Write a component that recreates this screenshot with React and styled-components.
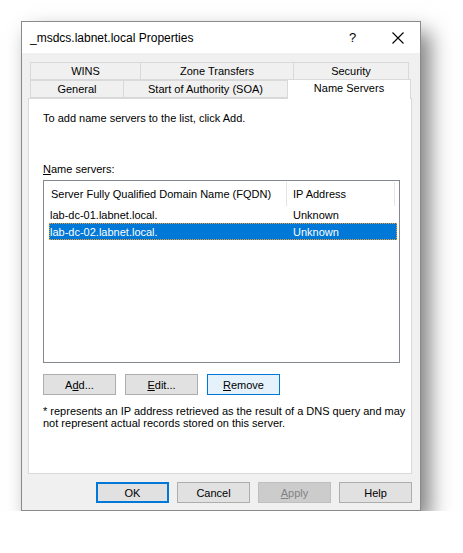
import React from "react";
import styled, { createGlobalStyle } from "styled-components";

const GlobalStyle = createGlobalStyle`
  html, body {
    margin: 0;
    background: #ffffff;
  }
  body {
    font-family: "Liberation Sans", Arial, sans-serif;
    font-size: 11px;
    color: #000;
  }
`;

const topTabs = [
  { label: "WINS", width: 110 },
  { label: "Zone Transfers", width: 153 },
  { label: "Security", width: 116 },
];

const bottomTabs = [
  { label: "General", width: 93 },
  { label: "Start of Authority (SOA)", width: 164 },
  { label: "Name Servers", width: 124, active: true },
];

const servers = [
  { name: "lab-dc-01.labnet.local.", ip: "Unknown" },
  { name: "lab-dc-02.labnet.local.", ip: "Unknown", selected: true },
];

function App() {
  return (
    <Page>
      <GlobalStyle />
      <Window>
        <TitleBar>
          <Title>_msdcs.labnet.local Properties</Title>
          <TitleBtn>?</TitleBtn>
          <TitleBtn>
            <svg width="12" height="12" viewBox="0 0 12 12">
              <path d="M0.5 0.5 L11.5 11.5 M11.5 0.5 L0.5 11.5" stroke="#000" strokeWidth="1.1" />
            </svg>
          </TitleBtn>
        </TitleBar>

        <Body>
          <Tabs>
            <TabRow>
              {topTabs.map((t) => (
                <Tab key={t.label} width={t.width}>{t.label}</Tab>
              ))}
            </TabRow>
            <TabRow>
              {bottomTabs.map((t) => (
                <Tab key={t.label} width={t.width} active={t.active}>{t.label}</Tab>
              ))}
            </TabRow>
          </Tabs>

          <Panel>
            <Intro>To add name servers to the list, click Add.</Intro>
            <ListLabel><u>N</u>ame servers:</ListLabel>
            <ListBox>
              <ListHeader>
                <HeadCell width={238} pad={2}>Server Fully Qualified Domain Name (FQDN)</HeadCell>
                <HeadCell width={108} pad={6}>IP Address</HeadCell>
              </ListHeader>
              {servers.map((s) => (
                <ListRow key={s.name} selected={s.selected}>
                  <Cell width={238} pad={1}>{s.name}</Cell>
                  <Cell width={108} pad={6}>{s.ip}</Cell>
                </ListRow>
              ))}
            </ListBox>

            <ButtonRow>
              <Button>A<u>d</u>d...</Button>
              <Button><u>E</u>dit...</Button>
              <Button focused><u>R</u>emove</Button>
            </ButtonRow>

            <Note>
              * represents an IP address retrieved as the result of a DNS query and may
              <br />
              not represent actual records stored on this server.
            </Note>
          </Panel>

          <Footer>
            <Button primary>OK</Button>
            <Button>Cancel</Button>
            <Button disabled><u>A</u>pply</Button>
            <Button>Help</Button>
          </Footer>
        </Body>
      </Window>
    </Page>
  );
}

const Page = styled.div`
  padding: 21px 0 0 21px;
`;

const Window = styled.div`
  width: 398px;
  height: 488px;
  border: 1px solid #8a8a8a;
  background: #f0f0f0;
  box-shadow: 9px 11px 20px rgba(0, 0, 0, 0.5);
  display: flex;
  flex-direction: column;
`;

const TitleBar = styled.div`
  height: 31px;
  background: #ffffff;
  display: flex;
  align-items: center;
  padding-left: 8px;
`;

const Title = styled.div`
  flex: 1;
  font-size: 12px;
  color: #000;
`;

const TitleBtn = styled.div`
  width: 45px;
  height: 31px;
  display: flex;
  align-items: center;
  justify-content: center;
  font-size: 13px;
`;

const Body = styled.div`
  flex: 1;
  display: flex;
  flex-direction: column;
  padding: 9px 8px 0 6px;
`;

const Tabs = styled.div`
  display: flex;
  flex-direction: column;
  padding-left: 2px;
`;

const TabRow = styled.div`
  display: flex;
  height: 18px;
  align-items: flex-end;
`;

const Tab = styled.div`
  box-sizing: border-box;
  width: ${(p) => p.width}px;
  height: ${(p) => (p.active ? 20 : 18)}px;
  border: 1px solid #d9d9d9;
  border-bottom: ${(p) => (p.active ? "none" : "1px solid #d9d9d9")};
  border-right: ${(p) => (p.active ? "1px solid #d9d9d9" : "none")};
  background: ${(p) => (p.active ? "#ffffff" : "#f0f0f0")};
  margin-bottom: ${(p) => (p.active ? "-1px" : "0")};
  position: relative;
  z-index: ${(p) => (p.active ? 2 : 1)};
  display: flex;
  align-items: ${(p) => (p.active ? "flex-start" : "center")};
  padding-top: ${(p) => (p.active ? "2px" : "0")};
  justify-content: center;
  white-space: nowrap;
  &:last-child {
    border-right: 1px solid #d9d9d9;
  }
`;

const Panel = styled.div`
  box-sizing: border-box;
  width: 384px;
  height: 376px;
  background: #ffffff;
  border: 1px solid #d9d9d9;
  padding: 12px 14px 0 14px;
  display: flex;
  flex-direction: column;
`;

const Intro = styled.div`
  height: 14px;
  line-height: 14px;
`;

const ListLabel = styled.div`
  margin-top: 37px;
  height: 14px;
  line-height: 14px;
`;

const ListBox = styled.div`
  box-sizing: border-box;
  margin-top: 4px;
  width: 357px;
  height: 183px;
  border: 1px solid #828790;
  padding: 1px 2px 0 5px;
  display: flex;
  flex-direction: column;
`;

const ListHeader = styled.div`
  display: flex;
  height: 24px;
`;

const HeadCell = styled.div`
  box-sizing: border-box;
  width: ${(p) => p.width}px;
  border-right: 1px solid #e5e5e5;
  display: flex;
  align-items: center;
  padding-left: ${(p) => p.pad}px;
  white-space: nowrap;
`;

const ListRow = styled.div`
  display: flex;
  height: 17px;
  align-items: center;
  background: ${(p) => (p.selected ? "#0078d7" : "transparent")};
  color: ${(p) => (p.selected ? "#ffffff" : "#000")};
  outline: ${(p) => (p.selected ? "1px dotted #f29d2b" : "none")};
  outline-offset: -1px;
`;

const Cell = styled.div`
  box-sizing: border-box;
  width: ${(p) => p.width}px;
  padding-left: ${(p) => p.pad}px;
`;

const ButtonRow = styled.div`
  display: flex;
  gap: 9px;
  margin-top: 11px;
`;

const Button = styled.div`
  box-sizing: border-box;
  width: 73px;
  height: 21px;
  display: flex;
  align-items: center;
  justify-content: center;
  background: ${(p) => (p.focused ? "#e5f1fb" : p.disabled ? "#cccccc" : "#e1e1e1")};
  border: ${(p) =>
    p.primary
      ? "2px solid #0078d7"
      : p.focused
      ? "1px solid #0078d7"
      : p.disabled
      ? "1px solid #bfbfbf"
      : "1px solid #adadad"};
  color: ${(p) => (p.disabled ? "#838383" : "#000")};
`;

const Note = styled.div`
  margin-top: 10px;
  line-height: 12px;
  white-space: nowrap;
`;

const Footer = styled.div`
  display: flex;
  justify-content: flex-end;
  gap: 8px;
  margin-top: 8px;
`;

export default App;
